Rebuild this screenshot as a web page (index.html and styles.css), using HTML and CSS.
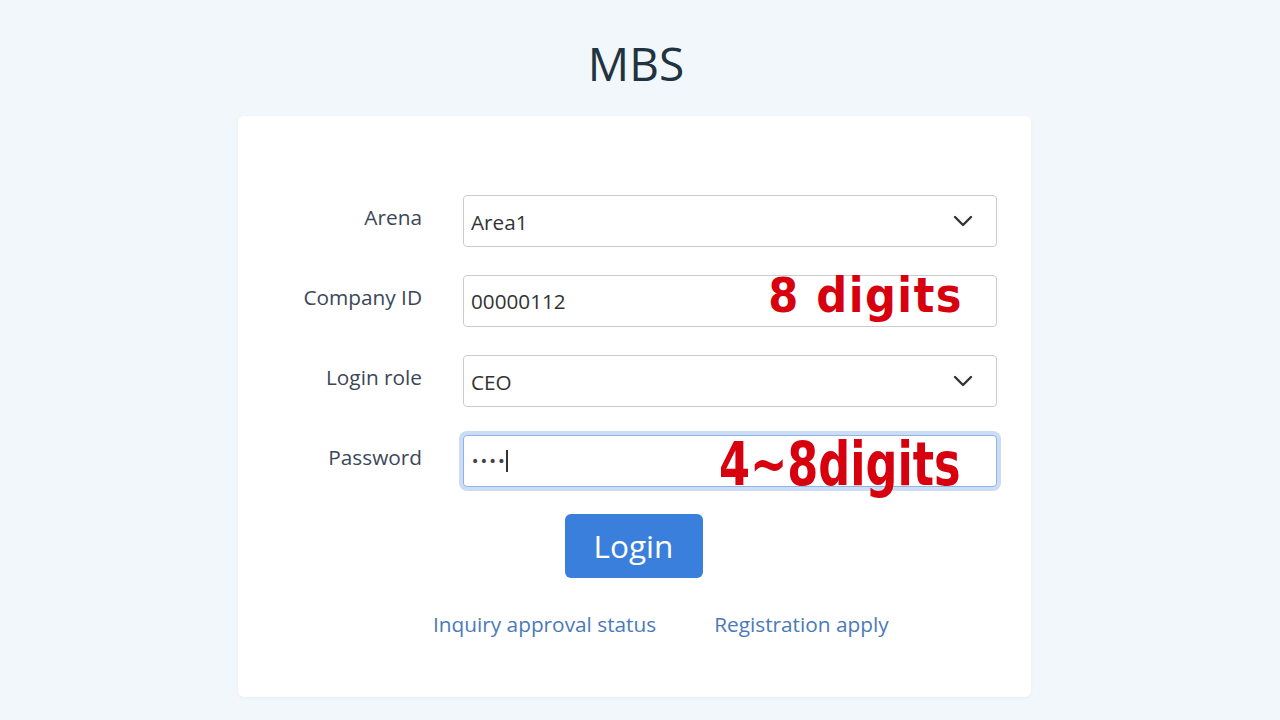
FILE: index.html
```html
<!DOCTYPE html>
<html lang="en">
<head>
<meta charset="utf-8">
<title>MBS</title>
<link rel="stylesheet" href="styles.css">
</head>
<body>
<h1 class="title">MBS</h1>
<main class="card">
  <form class="form">
    <label class="label" for="arena">Arena</label>
    <div class="field">
      <select id="arena" class="control select"><option>Area1</option></select>
      <svg class="chevron" viewBox="0 0 20 12" width="20" height="12"><path d="M2 2 L10 10 L18 2" fill="none" stroke="#333" stroke-width="2.4" stroke-linecap="round" stroke-linejoin="round"/></svg>
    </div>

    <label class="label" for="cid">Company ID</label>
    <div class="field">
      <input id="cid" class="control" type="text" value="00000112">
      <span class="note note-id">8 digits</span>
    </div>

    <label class="label" for="role">Login role</label>
    <div class="field">
      <select id="role" class="control select"><option>CEO</option></select>
      <svg class="chevron" viewBox="0 0 20 12" width="20" height="12"><path d="M2 2 L10 10 L18 2" fill="none" stroke="#333" stroke-width="2.4" stroke-linecap="round" stroke-linejoin="round"/></svg>
    </div>

    <label class="label" for="pwd">Password</label>
    <div class="field">
      <input id="pwd" class="control focused" type="password" value="1234">
      <span class="caret"></span>
      <span class="note note-pwd">4~8digits</span>
    </div>
  </form>
  <div class="actions">
    <button class="btn" type="button">Login</button>
  </div>
  <nav class="links">
    <a href="#">Inquiry approval status</a>
    <a href="#">Registration apply</a>
  </nav>
</main>
</body>
</html>
```

FILE: styles.css
```css
* { box-sizing: border-box; }
html, body { margin: 0; padding: 0; }
body {
  background: #f2f7fb;
  font-family: "Open Sans", "Noto Sans", sans-serif;
  width: 1280px;
  height: 720px;
  overflow: hidden;
}
.title {
  margin: 34px 0 24px;
  text-align: center;
  font-weight: 400;
  font-size: 46px;
  line-height: 58px;
  color: #1f3440;
  padding-right: 8px;
}
.card {
  margin-left: 238px;
  width: 793px;
  height: 581px;
  background: #fff;
  border-radius: 6px;
  box-shadow: 0 1px 3px rgba(30, 60, 90, 0.06);
  padding-top: 79px;
}
.form {
  display: grid;
  grid-template-columns: 184px 534px;
  column-gap: 41px;
  row-gap: 28px;
}
.label {
  text-align: right;
  font-size: 20.8px;
  line-height: 28px;
  color: #3b4759;
  padding-top: 8px;
}
.field {
  position: relative;
  height: 52px;
}
.control {
  width: 100%;
  height: 52px;
  border: 1px solid #c9cdd2;
  border-radius: 4px;
  background: #fff;
  padding: 0 40px 0 7px;
  font-family: "Open Sans", "Noto Sans", sans-serif;
  font-size: 20.7px;
  color: #333;
  outline: none;
}
.select {
  appearance: none;
  -webkit-appearance: none;
  padding-top: 2px;
}
.focused {
  border-color: #8fb4e6;
  box-shadow: 0 0 0 4px rgba(70, 130, 215, 0.28);
  font-family: "DejaVu Sans", sans-serif;
  font-size: 14px;
  letter-spacing: 0.5px;
  color: #444;
  padding-left: 7px;
}
.chevron {
  position: absolute;
  right: 24px;
  top: 20px;
  pointer-events: none;
}
.caret {
  position: absolute;
  left: 43px;
  top: 15px;
  width: 1.5px;
  height: 22px;
  background: #333;
}
.note {
  position: absolute;
  right: 36px;
  font-family: "DejaVu Sans Condensed", "DejaVu Sans", sans-serif;
  font-weight: 700;
  color: #d6000f;
  line-height: 1;
  white-space: nowrap;
  transform-origin: right center;
  pointer-events: none;
}
.note-id {
  font-size: 48px;
  top: -4px;
  letter-spacing: 1.5px;
  right: 34px;
}
.note-pwd {
  font-size: 60px;
  top: -1px;
  transform: scaleX(0.826);
}
.actions {
  display: flex;
  justify-content: center;
  margin-top: 27px;
  padding-right: 2px;
}
.btn {
  width: 138px;
  height: 64px;
  border: none;
  border-radius: 6px;
  background: #3b7fdc;
  color: #fff;
  font-family: "Open Sans", "Noto Sans", sans-serif;
  font-size: 31.5px;
  padding: 0 0 2px;
}
.links {
  display: flex;
  gap: 58px;
  margin-top: 32px;
  padding-left: 195px;
}
.links a {
  font-size: 20.8px;
  line-height: 28px;
  color: #4a7ab8;
  text-decoration: none;
}
```
